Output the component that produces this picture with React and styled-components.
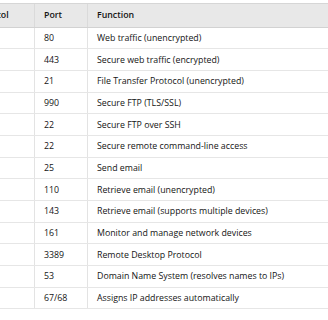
import React from 'react';
import styled, { createGlobalStyle } from 'styled-components';

const GlobalStyle = createGlobalStyle`
  html, body {
    margin: 0;
    padding: 0;
    background: #ffffff;
  }
  body {
    font-family: "Open Sans", "Noto Sans", Arial, sans-serif;
    color: #141414;
  }
`;

const Viewport = styled.div`
  width: 328px;
  height: 320px;
  overflow: hidden;
  padding-top: 3px;
  box-sizing: border-box;
`;

const Table = styled.table`
  border-collapse: collapse;
  margin-left: -37px;
  font-size: 8.8px;
  line-height: 12px;
  table-layout: fixed;
  width: 420px;
`;

const Head = styled.th`
  width: ${(p) => (p.$width ? `${p.$width}px` : 'auto')};
  height: 22.5px;
  padding: 0 9px;
  text-align: left;
  font-weight: 600;
  background: #e8e8e8;
  border-top: 1px solid #d6d6d6;
  border-bottom: 1px solid #d2d2d2;
  border-left: 1px solid #dadada;
  white-space: nowrap;
`;

const Cell = styled.td`
  height: 20.7px;
  padding: 0 9px;
  border-bottom: 1px solid #e6e6e6;
  border-left: 1px solid #e3e3e3;
  white-space: nowrap;
  overflow: hidden;
`;

const ports = [
  ['HTTP', '80', 'Web traffic (unencrypted)'],
  ['HTTPS', '443', 'Secure web traffic (encrypted)'],
  ['FTP', '21', 'File Transfer Protocol (unencrypted)'],
  ['FTPS', '990', 'Secure FTP (TLS/SSL)'],
  ['SFTP', '22', 'Secure FTP over SSH'],
  ['SSH', '22', 'Secure remote command-line access'],
  ['SMTP', '25', 'Send email'],
  ['POP3', '110', 'Retrieve email (unencrypted)'],
  ['IMAP', '143', 'Retrieve email (supports multiple devices)'],
  ['SNMP', '161', 'Monitor and manage network devices'],
  ['RDP', '3389', 'Remote Desktop Protocol'],
  ['DNS', '53', 'Domain Name System (resolves names to IPs)'],
  ['DHCP', '67/68', 'Assigns IP addresses automatically'],
];

export default function App() {
  return (
    <>
      <GlobalStyle />
      <Viewport>
        <Table>
          <thead>
            <tr>
              <Head $width={52}>Protocol</Head>
              <Head $width={34}>Port</Head>
              <Head>Function</Head>
            </tr>
          </thead>
          <tbody>
            {ports.map(([name, port, fn]) => (
              <tr key={name}>
                <Cell aria-label={name} />
                <Cell>{port}</Cell>
                <Cell>{fn}</Cell>
              </tr>
            ))}
          </tbody>
        </Table>
      </Viewport>
    </>
  );
}
